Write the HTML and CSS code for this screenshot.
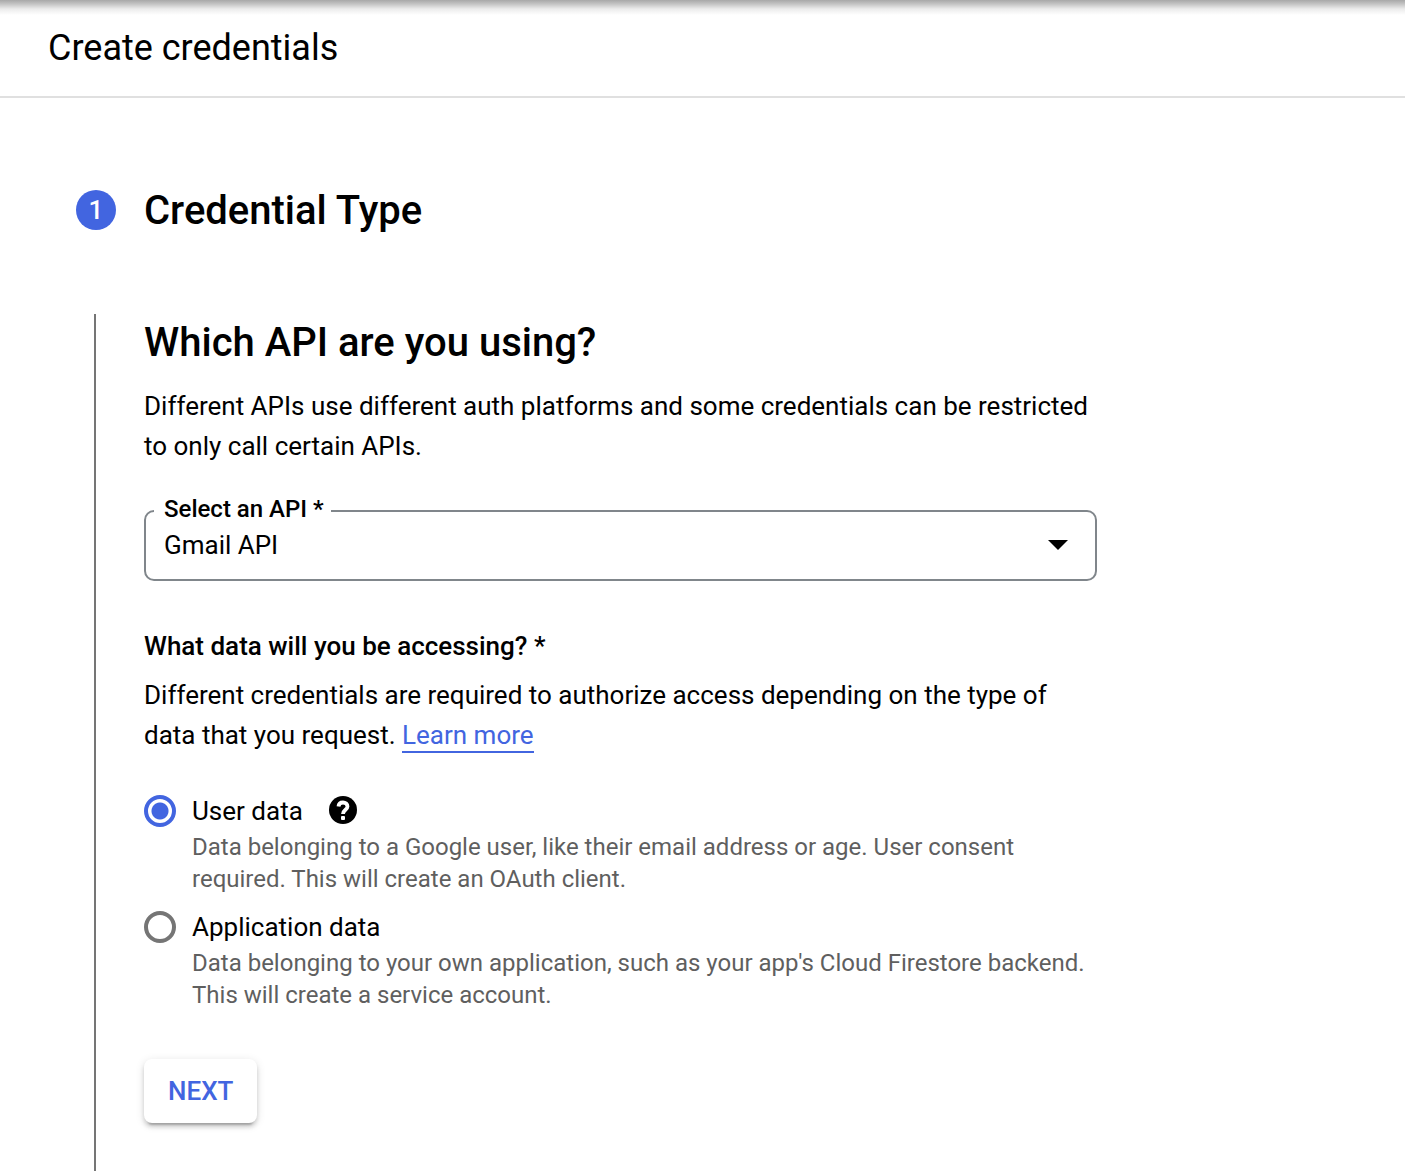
FILE: index.html
```html
<!DOCTYPE html>
<html lang="en">
<head>
    <meta charset="UTF-8">
    <meta name="viewport" content="width=device-width, initial-scale=1.0">
    <title>Create credentials</title>

    <link rel="stylesheet" href="styles.css">
</head>
<body>
    <header class="page-header">
        <h1>Create credentials</h1>
    </header>

    <main class="stepper">
        <!-- Step title -->
        <div class="step-header">
            <span class="step-number">1</span>
            <h2>Credential Type</h2>
        </div>

        <!-- Step content -->
        <form class="step-body">
            <div class="step-content">
                <h2>Which API are you using?</h2>
                <p class="text">Different APIs use different auth platforms and some credentials can be restricted to only call certain APIs.</p>

                <div class="select-field">
                    <label for="api">Select an API *</label>
                    <select id="api" name="api" required>
                        <option>Gmail API</option>
                    </select>
                    <svg class="select-arrow" viewBox="0 0 20 10" aria-hidden="true">
                        <path d="M0 0h20L10 10z"/>
                    </svg>
                </div>

                <h3>What data will you be accessing? *</h3>
                <p class="text">Different credentials are required to authorize access depending on the type of data that you request. <a href="#">Learn more</a></p>

                <div class="radio-group">
                    <div class="radio-option">
                        <input type="radio" id="user-data" name="data-type" checked>
                        <div class="radio-text">
                            <div class="radio-title">
                                <label for="user-data">User data</label>
                                <svg class="help-icon" viewBox="0 0 28 28" role="img" aria-label="Help">
                                    <circle cx="14" cy="14" r="14"/>
                                    <path d="M9.500 10.500C9.700 8 11.500 6.500 14 6.500s4.500 1.500 4.500 4c0 3.200-4.500 3.400-4.500 7.500" fill="none" stroke="#fff" stroke-width="3.800"/>
                                    <rect x="12" y="20" width="4" height="4" rx="1" fill="#fff"/>
                                </svg>
                            </div>
                            <p class="hint">Data belonging to a Google user, like their email address or age. User consent required. This will create an OAuth client.</p>
                        </div>
                    </div>

                    <div class="radio-option">
                        <input type="radio" id="app-data" name="data-type">
                        <div class="radio-text">
                            <div class="radio-title">
                                <label for="app-data">Application data</label>
                            </div>
                            <p class="hint">Data belonging to your own application, such as your app's Cloud Firestore backend. This will create a service account.</p>
                        </div>
                    </div>
                </div>

                <button type="button" class="next-button">NEXT</button>
            </div>
        </form>
    </main>
</body>
</html>
```
FILE: styles.css
```css
* {
    margin: 0;
    padding: 0;
    box-sizing: border-box;
}

body {
    font-family: Roboto, Arial, sans-serif;
    font-size: 26px;
    line-height: 40px;
    color: #000;
    background: #fff;
    min-height: 100vh;
    display: flex;
    flex-direction: column;
}

/* Header */
.page-header {
    padding: 24px 48px;
    border-bottom: 2px solid #e0e0e0;
    background: linear-gradient(180deg, #a8a8a8 0, #c4c4c4 4px, #ececec 9px, #fff 15px);
}

.page-header h1 {
    font-size: 36px;
    font-weight: 400;
    line-height: 48px;
}

/* Stepper */
.stepper {
    flex: 1;
    display: flex;
    flex-direction: column;
    padding: 92px 76px 0;
}

.step-header {
    display: flex;
    align-items: flex-start;
    gap: 28px;
    margin-bottom: 82px;
}

.step-number {
    width: 40px;
    height: 40px;
    border-radius: 50%;
    background: #4265e0;
    color: #fff;
    font-weight: 500;
    text-align: center;
}

h2 {
    font-size: 40px;
    font-weight: 500;
    line-height: 42px;
}

.step-body {
    flex: 1;
    margin-left: 18px;
    padding: 8px 0 48px 48px;
    border-left: 2px solid #757575;
}

.step-content {
    max-width: 953px;
}

.step-content h2 {
    margin-bottom: 22px;
}

.text a {
    padding-bottom: 1px;
    color: #4265e0;
    text-decoration: none;
    border-bottom: 2px solid #4265e0;
}

/* Select */
.select-field {
    position: relative;
    margin: 44px 0;
}

.select-field label {
    position: absolute;
    top: -17px;
    left: 10px;
    padding: 0 7px 0 10px;
    background: #fff;
    font-size: 24px;
    font-weight: 500;
    line-height: 32px;
}

.select-field select {
    display: block;
    width: 100%;
    height: 71px;
    padding: 0 56px 2px 18px;
    border: 2px solid #80868b;
    border-radius: 10px;
    appearance: none;
    background: #fff;
    color: #000;
    font: inherit;
}

.select-arrow {
    position: absolute;
    top: 30px;
    right: 29px;
    width: 20px;
    height: 10px;
    pointer-events: none;
}

h3 {
    font-size: 26px;
    font-weight: 500;
    line-height: 42px;
    margin-bottom: 8px;
}

/* Radio buttons */
.radio-group {
    display: flex;
    flex-direction: column;
    gap: 12px;
    margin: 36px 0 48px;
}

.radio-option {
    display: flex;
    gap: 16px;
}

.radio-option input {
    flex: none;
    width: 32px;
    height: 32px;
    margin-top: 4px;
    border: 4px solid #757575;
    border-radius: 50%;
    appearance: none;
}

.radio-option input:checked {
    border-color: #4265e0;
    background: radial-gradient(circle, #4265e0 8px, #fff 9px);
}

.radio-title {
    display: flex;
    align-items: center;
    gap: 26px;
}

.help-icon {
    width: 28px;
    height: 28px;
    margin-bottom: 2px;
}

.hint {
    color: #5f5f5f;
    font-size: 24px;
    line-height: 32px;
}

/* Button */
.next-button {
    height: 64px;
    padding: 0 24px;
    border: 0;
    border-radius: 8px;
    background: #fff;
    color: #4265e0;
    font: inherit;
    font-weight: 500;
    box-shadow: 0 6px 2px -4px rgba(0, 0, 0, 0.2), 0 4px 4px rgba(0, 0, 0, 0.14), 0 2px 10px rgba(0, 0, 0, 0.12);
}
```
